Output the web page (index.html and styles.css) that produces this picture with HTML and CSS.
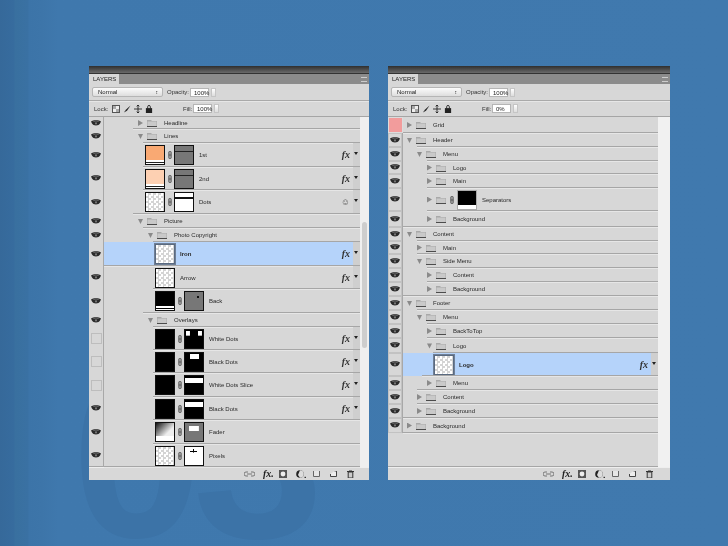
FILE: index.html
```html
<!DOCTYPE html>
<html lang="en">
<head>
<meta charset="utf-8">
<title>Layers panels</title>
<link rel="stylesheet" href="styles.css">
</head>
<body>
<svg class="defs" aria-hidden="true">
  <symbol id="eye" viewBox="0 0 10 7"><path d="M0 1.5 C2 -.3 8 -.3 10 1.5 L9 3.5 C8 6 2 6 1 3.5 Z" fill="#2a2a2a"/><path d="M1.5 1.8 C3 .9 7 .9 8.5 1.8 L7 2 C6 1.4 4 1.4 3 2 Z" fill="#bbb"/><circle cx="5" cy="3.4" r="1.1" fill="#777"/></symbol>
  <symbol id="folder" viewBox="0 0 10 8"><path d="M0 1 H4 L5 2 H10 V8 H0 Z" fill="#a9a9a9"/><path d="M.5 2.5 H9.5 V7 H.5 Z" fill="#c9c9c9"/><path d="M0 7 H10 V8 H0 Z" fill="#4c4c4c"/></symbol>
  <symbol id="link" viewBox="0 0 4 10"><rect x=".5" y=".5" width="3" height="9" rx="1" fill="#aaa" stroke="#444"/><path d="M.5 5 H3.5" stroke="#444"/></symbol>
  <symbol id="brush" viewBox="0 0 9 9"><path d="M8.5 .5 L3.5 5 L1 8.5 L4.5 6.5 Z" fill="#222"/></symbol>
  <symbol id="move" viewBox="0 0 9 9"><path d="M4.5 0 V9 M0 4.5 H9 M3 1.5 L4.5 0 L6 1.5 M3 7.5 L4.5 9 L6 7.5" stroke="#222" fill="none"/></symbol>
  <symbol id="lock" viewBox="0 0 7 9"><path d="M2 4 V2 A1.5 1.5 0 0 1 5 2 V4" stroke="#222" fill="none"/><rect x="0" y="3.5" width="7" height="5.5" fill="#222"/></symbol>
  <symbol id="transp" viewBox="0 0 8 8"><rect x=".5" y=".5" width="7" height="7" fill="#eee" stroke="#555"/><path d="M1 1 H4 V4 H1 Z M4 4 H7 V7 H4 Z" fill="#aaa"/></symbol>
  <symbol id="chain" viewBox="0 0 11 6"><path d="M4 1 H2 A2 2 0 0 0 2 5 H4 M7 1 H9 A2 2 0 0 1 9 5 H7 M3 3 H8" stroke="#777" fill="none"/></symbol>
  <symbol id="mask" viewBox="0 0 8 8"><rect width="8" height="8" fill="#555"/><circle cx="4" cy="4" r="2.4" fill="#eee"/></symbol>
  <symbol id="adj" viewBox="0 0 10 8"><circle cx="4" cy="4" r="3.8" fill="#222"/><path d="M4 .2 A3.8 3.8 0 0 1 4 7.8 L2 5 Z" fill="#ddd"/><rect x="8.5" y="6.8" width="1.5" height="1.2" fill="#333"/></symbol>
  <symbol id="newfolder" viewBox="0 0 7 6"><path d="M.5 0 V5.5 H6.5 V0" stroke="#666" fill="#e6e6e6"/></symbol>
  <symbol id="newlayer" viewBox="0 0 7 6"><path d="M4.5 0 H6.5 V5.5 H.5 V3" stroke="#444" fill="#eee"/></symbol>
  <symbol id="trash" viewBox="0 0 7 8"><path d="M0 1.5 H7 M2 1 H5 M1.2 2 H5.8 V8 H1.2 Z" stroke="#333" fill="#ccc"/></symbol>
</svg>

<div class="watermark" aria-hidden="true">03</div>

<main class="stage">
  <section class="panel panel-a">
    <div class="titlebar"></div>
    <div class="tabs"><span class="tab">LAYERS</span><span class="menu"></span></div>
    <div class="toolrow blendrow"><span class="select">Normal<i>&#8597;</i></span><span class="lbl">Opacity:</span><span class="num">100%</span><span class="step"></span></div>
    <div class="toolrow lockrow"><span class="lbl">Lock:</span><svg class="lk"><use href="#transp"/></svg><svg class="lk"><use href="#brush"/></svg><svg class="lk"><use href="#move"/></svg><svg class="lk"><use href="#lock"/></svg><span class="lbl fill">Fill:</span><span class="num">100%</span><span class="step"></span></div>
    <div class="list">
      <div class="rows">
        <div class="row h12"><span class="eye"><svg><use href="#eye"/></svg></span><div class="main lp34 b29"><span class="tri right"></span><svg class="fd"><use href="#folder"/></svg><span class="name">Headline</span></div></div>
        <div class="row h14"><span class="eye"><svg><use href="#eye"/></svg></span><div class="main lp34 b39"><span class="tri down"></span><svg class="fd"><use href="#folder"/></svg><span class="name">Lines</span></div></div>
        <div class="row h24"><span class="eye"><svg><use href="#eye"/></svg></span><div class="main lp41 b39"><span class="th orange"></span><svg class="lnk"><use href="#link"/></svg><span class="th grey"></span><span class="name nm">1st</span><span class="fx">fx</span><span class="drop"></span></div></div>
        <div class="row h23"><span class="eye"><svg><use href="#eye"/></svg></span><div class="main lp41 b39"><span class="th peach"></span><svg class="lnk"><use href="#link"/></svg><span class="th grey"></span><span class="name nm">2nd</span><span class="fx">fx</span><span class="drop"></span></div></div>
        <div class="row h24"><span class="eye"><svg><use href="#eye"/></svg></span><div class="main lp41 b29"><span class="th check"></span><svg class="lnk"><use href="#link"/></svg><span class="th whiteline"></span><span class="name nm">Dots</span><span class="fx sm">&#9786;</span><span class="drop"></span></div></div>
        <div class="row h14"><span class="eye"><svg><use href="#eye"/></svg></span><div class="main lp34 b39"><span class="tri down"></span><svg class="fd"><use href="#folder"/></svg><span class="name">Picture</span></div></div>
        <div class="row h14"><span class="eye"><svg><use href="#eye"/></svg></span><div class="main lp44 b49"><span class="tri down"></span><svg class="fd"><use href="#folder"/></svg><span class="name">Photo Copyright</span></div></div>
        <div class="row h24 sel"><span class="eye"><svg><use href="#eye"/></svg></span><div class="main lp51 b0"><span class="th check corners"></span><span class="name solo"><b>Iron</b></span><span class="fx">fx</span><span class="drop"></span></div></div>
        <div class="row h23"><span class="eye"><svg><use href="#eye"/></svg></span><div class="main lp51 b49"><span class="th check"></span><span class="name solo">Arrow</span><span class="fx">fx</span><span class="drop"></span></div></div>
        <div class="row h24"><span class="eye"><svg><use href="#eye"/></svg></span><div class="main lp51 b39"><span class="th blackbar"></span><svg class="lnk"><use href="#link"/></svg><span class="th greydot"></span><span class="name nm">Back</span></div></div>
        <div class="row h14"><span class="eye"><svg><use href="#eye"/></svg></span><div class="main lp44 b49"><span class="tri down"></span><svg class="fd"><use href="#folder"/></svg><span class="name">Overlays</span></div></div>
        <div class="row h23"><span class="eye off"></span><div class="main lp51 b49"><span class="th black"></span><svg class="lnk"><use href="#link"/></svg><span class="th spots"></span><span class="name nm">White Dots</span><span class="fx">fx</span><span class="drop"></span></div></div>
        <div class="row h23"><span class="eye off"></span><div class="main lp51 b49"><span class="th black"></span><svg class="lnk"><use href="#link"/></svg><span class="th box"></span><span class="name nm">Black Dots</span><span class="fx">fx</span><span class="drop"></span></div></div>
        <div class="row h24"><span class="eye off"></span><div class="main lp51 b49"><span class="th black"></span><svg class="lnk"><use href="#link"/></svg><span class="th band"></span><span class="name nm">White Dots Slice</span><span class="fx">fx</span><span class="drop"></span></div></div>
        <div class="row h23"><span class="eye"><svg><use href="#eye"/></svg></span><div class="main lp51 b49"><span class="th black"></span><svg class="lnk"><use href="#link"/></svg><span class="th band"></span><span class="name nm">Black Dots</span><span class="fx">fx</span><span class="drop"></span></div></div>
        <div class="row h24"><span class="eye"><svg><use href="#eye"/></svg></span><div class="main lp51 b49"><span class="th fader"></span><svg class="lnk"><use href="#link"/></svg><span class="th greybox"></span><span class="name nm">Fader</span></div></div>
        <div class="row h23"><span class="eye"><svg><use href="#eye"/></svg></span><div class="main lp51 b0"><span class="th check"></span><svg class="lnk"><use href="#link"/></svg><span class="th pixels"></span><span class="name nm">Pixels</span></div></div>
      </div>
      <div class="scroll"><span class="thumb"></span></div>
    </div>
    <div class="footer"><svg class="f1"><use href="#chain"/></svg><span class="ffx">fx.</span><svg class="f2"><use href="#mask"/></svg><svg class="f3"><use href="#adj"/></svg><svg class="f4"><use href="#newfolder"/></svg><svg class="f4"><use href="#newlayer"/></svg><svg class="f5"><use href="#trash"/></svg></div>
  </section>

  <section class="panel panel-b">
    <div class="titlebar"></div>
    <div class="tabs"><span class="tab">LAYERS</span><span class="menu"></span></div>
    <div class="toolrow blendrow"><span class="select">Normal<i>&#8597;</i></span><span class="lbl">Opacity:</span><span class="num">100%</span><span class="step"></span></div>
    <div class="toolrow lockrow"><span class="lbl">Lock:</span><svg class="lk"><use href="#transp"/></svg><svg class="lk"><use href="#brush"/></svg><svg class="lk"><use href="#move"/></svg><svg class="lk"><use href="#lock"/></svg><span class="lbl fill">Fill:</span><span class="num">0%</span><span class="step"></span></div>
    <div class="list">
      <div class="rows">
        <div class="row h16"><span class="eye pink"></span><div class="main lp4 b0"><span class="tri right"></span><svg class="fd"><use href="#folder"/></svg><span class="name">Grid</span></div></div>
        <div class="row h14"><span class="eye"><svg><use href="#eye"/></svg></span><div class="main lp4 b14"><span class="tri down"></span><svg class="fd"><use href="#folder"/></svg><span class="name">Header</span></div></div>
        <div class="row h14"><span class="eye"><svg><use href="#eye"/></svg></span><div class="main lp14 b24"><span class="tri down"></span><svg class="fd"><use href="#folder"/></svg><span class="name">Menu</span></div></div>
        <div class="row h13"><span class="eye"><svg><use href="#eye"/></svg></span><div class="main lp24 b24"><span class="tri right"></span><svg class="fd"><use href="#folder"/></svg><span class="name">Logo</span></div></div>
        <div class="row h14"><span class="eye"><svg><use href="#eye"/></svg></span><div class="main lp24 b24"><span class="tri right"></span><svg class="fd"><use href="#folder"/></svg><span class="name">Main</span></div></div>
        <div class="row h23"><span class="eye"><svg><use href="#eye"/></svg></span><div class="main lp24 b24"><span class="tri right"></span><svg class="fd"><use href="#folder"/></svg><svg class="lnk tight"><use href="#link"/></svg><span class="th blackwhite"></span><span class="name nm">Separators</span></div></div>
        <div class="row h16"><span class="eye"><svg><use href="#eye"/></svg></span><div class="main lp24 b0"><span class="tri right"></span><svg class="fd"><use href="#folder"/></svg><span class="name">Background</span></div></div>
        <div class="row h14"><span class="eye"><svg><use href="#eye"/></svg></span><div class="main lp4 b14"><span class="tri down"></span><svg class="fd"><use href="#folder"/></svg><span class="name">Content</span></div></div>
        <div class="row h13"><span class="eye"><svg><use href="#eye"/></svg></span><div class="main lp14 b14"><span class="tri right"></span><svg class="fd"><use href="#folder"/></svg><span class="name">Main</span></div></div>
        <div class="row h14"><span class="eye"><svg><use href="#eye"/></svg></span><div class="main lp14 b24"><span class="tri down"></span><svg class="fd"><use href="#folder"/></svg><span class="name">Side Menu</span></div></div>
        <div class="row h14"><span class="eye"><svg><use href="#eye"/></svg></span><div class="main lp24 b24"><span class="tri right"></span><svg class="fd"><use href="#folder"/></svg><span class="name">Content</span></div></div>
        <div class="row h14"><span class="eye"><svg><use href="#eye"/></svg></span><div class="main lp24 b0"><span class="tri right"></span><svg class="fd"><use href="#folder"/></svg><span class="name">Background</span></div></div>
        <div class="row h14"><span class="eye"><svg><use href="#eye"/></svg></span><div class="main lp4 b14"><span class="tri down"></span><svg class="fd"><use href="#folder"/></svg><span class="name">Footer</span></div></div>
        <div class="row h14"><span class="eye"><svg><use href="#eye"/></svg></span><div class="main lp14 b24"><span class="tri down"></span><svg class="fd"><use href="#folder"/></svg><span class="name">Menu</span></div></div>
        <div class="row h14"><span class="eye"><svg><use href="#eye"/></svg></span><div class="main lp24 b24"><span class="tri right"></span><svg class="fd"><use href="#folder"/></svg><span class="name">BackToTop</span></div></div>
        <div class="row h15"><span class="eye"><svg><use href="#eye"/></svg></span><div class="main lp24 b30"><span class="tri down"></span><svg class="fd"><use href="#folder"/></svg><span class="name">Logo</span></div></div>
        <div class="row h23 sel"><span class="eye"><svg><use href="#eye"/></svg></span><div class="main lp31 b19"><span class="th check corners"></span><span class="name solo"><b>Logo</b></span><span class="fx">fx</span><span class="drop"></span></div></div>
        <div class="row h14"><span class="eye"><svg><use href="#eye"/></svg></span><div class="main lp24 b14"><span class="tri right"></span><svg class="fd"><use href="#folder"/></svg><span class="name">Menu</span></div></div>
        <div class="row h14"><span class="eye"><svg><use href="#eye"/></svg></span><div class="main lp14 b14"><span class="tri right"></span><svg class="fd"><use href="#folder"/></svg><span class="name">Content</span></div></div>
        <div class="row h14"><span class="eye"><svg><use href="#eye"/></svg></span><div class="main lp14 b0"><span class="tri right"></span><svg class="fd"><use href="#folder"/></svg><span class="name">Background</span></div></div>
        <div class="row h15"><span class="eye"><svg><use href="#eye"/></svg></span><div class="main lp4 b0"><span class="tri right"></span><svg class="fd"><use href="#folder"/></svg><span class="name">Background</span></div></div>
      </div>
      <div class="scroll"></div>
    </div>
    <div class="footer"><svg class="f1"><use href="#chain"/></svg><span class="ffx">fx.</span><svg class="f2"><use href="#mask"/></svg><svg class="f3"><use href="#adj"/></svg><svg class="f4"><use href="#newfolder"/></svg><svg class="f4"><use href="#newlayer"/></svg><svg class="f5"><use href="#trash"/></svg></div>
  </section>
</main>
</body>
</html>
```

FILE: styles.css
```css
* { box-sizing: border-box; }
html, body { margin: 0; height: 546px; overflow: hidden; }
body {
  position: relative;
  background: linear-gradient(90deg, #36699a 0, #376c9e 14px, #39709f 15px, #3a71a3 28px, #3c74a8 29px, #3d75a9 42px, #3f78ad 58px, #4079ae 100%);
  font-family: "Liberation Sans", Arial, sans-serif;
}
.defs { position: absolute; width: 0; height: 0; }
.watermark {
  position: absolute;
  left: 72px;
  top: 367px;
  font-size: 235px;
  line-height: .76;
  font-weight: 700;
  color: #3c73a7;
  letter-spacing: -10px;
}
.stage {
  position: relative;
  z-index: 1;
  display: flex;
  gap: 19px;
  padding: 66px 0 0 89px;
}
.panel {
  height: 414px;
  display: flex;
  flex-direction: column;
  background: #d7d7d7;
  color: #222;
  font-size: 6px;
  filter: blur(.3px);
}
.panel-a { width: 280px; }
.panel-b { width: 282px; }

.titlebar { height: 7px; background: linear-gradient(#2f2f2f, #6a6a6a); flex: none; }
.tabs {
  height: 11px;
  flex: none;
  display: flex;
  justify-content: space-between;
  align-items: center;
  background: #8b8b8b;
  border-top: 1px solid #333;
}
.tab {
  width: 30px;
  height: 100%;
  background: #d7d7d7;
  padding-left: 4px;
  line-height: 10px;
  font-size: 6px;
  color: #222;
}
.menu {
  width: 6px;
  height: 5px;
  margin-right: 2px;
  border-top: 1px solid #ccc;
  border-bottom: 1px solid #ccc;
}
.toolrow {
  flex: none;
  display: flex;
  align-items: center;
  padding-left: 3px;
}
.blendrow { height: 17px; border-bottom: 1px solid #a9a9a9; box-shadow: 0 1px 0 #e6e6e6; }
.lockrow { height: 16px; padding-left: 5px; border-bottom: 1px solid #a5a5a5; }
.select {
  width: 71px;
  height: 10px;
  margin-right: 4px;
  padding: 0 4px 0 5px;
  display: flex;
  justify-content: space-between;
  align-items: center;
  background: linear-gradient(#fbfbfb, #dedede);
  border: 1px solid #b5b5b5;
  border-radius: 2px;
}
.select i { font-style: normal; font-size: 5px; }
.lbl { color: #333; }
.blendrow .lbl { width: 23px; }
.lockrow .lbl { width: 18px; }
.lockrow .lbl.fill { width: 10px; margin-left: 27px; }
.num {
  width: 19px;
  height: 9px;
  padding-left: 3px;
  line-height: 8px;
  background: #fff;
  border: 1px solid #b5b5b5;
  white-space: nowrap;
}
.step {
  width: 5px;
  height: 9px;
  margin-left: 2px;
  background: linear-gradient(#fff, #ddd);
  border: 1px solid #c5c5c5;
  position: relative;
}
.lk { width: 8px; height: 8px; margin-right: 3px; flex: none; }

.list { flex: 1; display: flex; min-height: 0; }
.rows { flex: 1; min-width: 0; border-bottom: 1px solid #a6a6a6; }
.scroll { width: 9px; background: #efefef; flex: none; position: relative; }
.panel-b .scroll { width: 12px; background: #f1f1f1; }
.thumb {
  position: absolute;
  left: 2px;
  right: 2px;
  top: 105px;
  height: 126px;
  background: #cdcdcd;
  border-radius: 3px;
}

.row { display: flex; }
.h12 { height: 12px; } .h13 { height: 13px; } .h14 { height: 14px; } .h15 { height: 15px; }
.h16 { height: 16px; } .h23 { height: 23px; } .h24 { height: 24px; }

.eye {
  flex: none;
  width: 15px;
  display: flex;
  align-items: center;
  justify-content: center;
  border-right: 1px solid #a8a8a8;
}
.eye svg { width: 10px; height: 7px; }
.panel-b .eye { box-shadow: inset 0 0 0 1px #c2c2c2; }
.eye.off::before {
  content: "";
  width: 9px;
  height: 9px;
  border: 1px solid #bdbdbd;
}
.panel-b .eye.pink { background: #f29c9c; border: 1px solid #dcdcdc; box-shadow: none; }

.main {
  flex: 1;
  min-width: 0;
  position: relative;
  display: flex;
  align-items: center;
}
.main::after {
  content: "";
  position: absolute;
  right: 0;
  bottom: 0;
  height: 1px;
  background: #a6a6a6;
  box-shadow: 0 1px 0 #e6e6e6;
}
.b0::after { left: 0; } .b14::after { left: 14px; } .b19::after { left: 19px; }
.b24::after { left: 24px; } .b29::after { left: 29px; } .b30::after { left: 30px; }
.b39::after { left: 39px; } .b49::after { left: 49px; }
.lp4 { padding-left: 4px; } .lp14 { padding-left: 14px; } .lp24 { padding-left: 24px; }
.lp31 { padding-left: 31px; } .lp34 { padding-left: 34px; } .lp41 { padding-left: 41px; }
.lp44 { padding-left: 44px; } .lp51 { padding-left: 51px; }

.sel .main { background: #b5d3fa; }

.tri { width: 5px; height: 6px; margin-right: 4px; flex: none; background: #8a8a8a; }
.tri.right { clip-path: polygon(0 0, 100% 50%, 0 100%); }
.tri.down { clip-path: polygon(0 15%, 100% 15%, 50% 100%); }
.fd { width: 10px; height: 8px; flex: none; margin-right: 7px; }
.fd + .lnk { margin-left: -3px; }
.lnk { width: 4px; height: 8px; margin: 0 2px 0 3px; flex: none; }
.fd + .lnk.tight { margin-right: 3px; }
.name { white-space: nowrap; color: #2a2a2a; }
.nm { margin-left: 5px; }
.solo { margin-left: 5px; }

.th {
  width: 20px;
  height: 20px;
  flex: none;
  position: relative;
  border: 1px solid #111;
  background: #fff;
}
.check {
  background: #fff repeating-conic-gradient(#d4d4d4 0 25%, #fff 0 50%) 0 0 / 5px 5px;
}
.orange { background: linear-gradient(#f9a973 0 76%, #fff 76% 88%, #222 88% 92%, #fff 92%); }
.peach { background: linear-gradient(#fdd0b2 0 76%, #fff 76% 88%, #222 88% 92%, #fff 92%); }
.grey { background: linear-gradient(#777 0 30%, #222 30% 36%, #777 36%); }
.whiteline { background: linear-gradient(#fff 0 25%, #111 25% 32%, #fff 32%); }
.blackbar { background: linear-gradient(#000 0 76%, #fff 76% 88%, #000 88% 92%, #fff 92%); }
.black { background: #000; }
.blackwhite { background: linear-gradient(#000 0 80%, #fff 80%); border-color: #aaa; }
.greydot { background: radial-gradient(circle at 72% 28%, #111 0 1px, transparent 1.5px), #777; }
.greybox { background: linear-gradient(#fff, #fff) 50% 25% / 55% 28% no-repeat, #777; }
.spots { background: linear-gradient(#fff, #fff) 10% 10% / 22% 26% no-repeat, linear-gradient(#fff, #fff) 90% 10% / 22% 26% no-repeat, #000; }
.box { background: linear-gradient(#fff, #fff) 50% 15% / 50% 30% no-repeat, #000; }
.band { background: linear-gradient(#000 0 10%, #fff 10% 40%, #000 40%); }
.fader { background: linear-gradient(#fff 0 75%, #222 75% 80%, #fff 80%) 0 100% / 100% 30% no-repeat, linear-gradient(135deg, #111, #eee 60%); }
.pixels { background: linear-gradient(#000, #000) 50% 25% / 40% 8% no-repeat, linear-gradient(#000, #000) 50% 18% / 8% 20% no-repeat, #fff; }
.corners { border: 1px solid #5a6a80; outline: 1px solid #6f7f96; }

.fx {
  margin-left: auto;
  font-family: "Liberation Serif", serif;
  font-style: italic;
  font-weight: 700;
  font-size: 10px;
  line-height: 1;
  color: #333;
  margin-right: 3px;
}
.fx.sm { font-size: 9px; font-style: normal; font-weight: 400; color: #555; }
.drop {
  width: 7px;
  align-self: stretch;
  margin-bottom: 1px;
  background: #cfcfcf;
  position: relative;
  flex: none;
}
.drop::after {
  content: "";
  position: absolute;
  left: 1px;
  top: 9px;
  border: 2.5px solid transparent;
  border-top: 3px solid #222;
  border-bottom: 0;
}

.footer {
  flex: none;
  height: 13px;
  display: flex;
  align-items: center;
  justify-content: flex-end;
  padding-right: 15px;
  background: #d8d8d8;
  border-top: 1px solid #eee;
}
.panel-b .footer { padding-right: 17px; }
.f1 { width: 11px; height: 6px; margin-right: 8px; }
.ffx { font-family: "Liberation Serif", serif; font-style: italic; font-weight: 700; font-size: 10px; line-height: 1; width: 16px; }
.f2 { width: 8px; height: 8px; margin-right: 9px; }
.f3 { width: 10px; height: 8px; margin-right: 7px; }
.f4 { width: 7px; height: 6px; margin-right: 10px; }
.f5 { width: 7px; height: 8px; }
```
